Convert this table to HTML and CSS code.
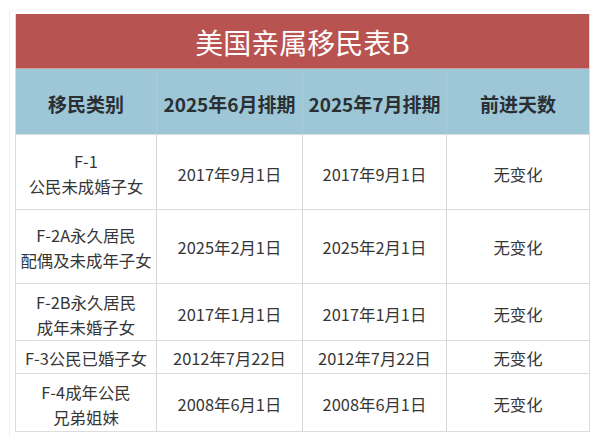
FILE: index.html
```html
<!DOCTYPE html>
<html lang="zh-CN">
<head>
<meta charset="utf-8">
<title>美国亲属移民表B</title>
<link rel="stylesheet" href="styles.css">
</head>
<body>
<div class="frame">
  <div class="table">
    <div class="title">美国亲属移民表B</div>
    <div class="row head">
      <div class="cell">移民类别</div>
      <div class="cell">2025年6月排期</div>
      <div class="cell">2025年7月排期</div>
      <div class="cell">前进天数</div>
    </div>
    <div class="row r1">
      <div class="cell">F-1<br>公民未成婚子女</div>
      <div class="cell">2017年9月1日</div>
      <div class="cell">2017年9月1日</div>
      <div class="cell">无变化</div>
    </div>
    <div class="row r2">
      <div class="cell">F-2A永久居民<br>配偶及未成年子女</div>
      <div class="cell">2025年2月1日</div>
      <div class="cell">2025年2月1日</div>
      <div class="cell">无变化</div>
    </div>
    <div class="row r3">
      <div class="cell">F-2B永久居民<br>成年未婚子女</div>
      <div class="cell">2017年1月1日</div>
      <div class="cell">2017年1月1日</div>
      <div class="cell">无变化</div>
    </div>
    <div class="row r4">
      <div class="cell">F-3公民已婚子女</div>
      <div class="cell">2012年7月22日</div>
      <div class="cell">2012年7月22日</div>
      <div class="cell">无变化</div>
    </div>
    <div class="row r5">
      <div class="cell">F-4成年公民<br>兄弟姐妹</div>
      <div class="cell">2008年6月1日</div>
      <div class="cell">2008年6月1日</div>
      <div class="cell">无变化</div>
    </div>
  </div>
</div>
</body>
</html>
```

FILE: styles.css
```css
html, body {
  margin: 0;
  padding: 0;
  background: #ffffff;
}

body {
  font-family: "Noto Sans CJK SC", "Noto Sans", sans-serif;
  color: #333333;
}

.frame {
  margin: 10px 0 0 9px;
  width: 584px;
  height: 428px;
  box-sizing: border-box;
  border-left: 1px solid #f1f1f1;
  border-top: 1px solid #f6f6f6;
  padding: 3px 0 0 5px;
}

.table {
  width: 575px;
  box-sizing: border-box;
  border: 1px solid #dcdcdc;
  border-top: none;
  background: #ffffff;
}

.title {
  height: 54px;
  background: #b85351;
  color: #ffffff;
  font-size: 28px;
  line-height: 54px;
  text-align: center;
  padding-top: 1px;
  box-sizing: border-box;
}

.row {
  display: grid;
  grid-template-columns: 140px 146px 144px 143px;
  border-top: 1px solid #dcdcdc;
  box-sizing: border-box;
}

.cell {
  display: flex;
  align-items: center;
  justify-content: center;
  text-align: center;
  font-size: 16.4px;
  line-height: 25px;
  color: #363636;
  border-left: 1px solid #d6d6d6;
}

.cell:first-child {
  border-left: none;
}

.head {
  height: 66px;
  background: #9dc7d7;
  border-top: 1px solid #c9a0a0;
}

.head .cell {
  font-size: 19px;
  font-weight: 700;
  color: #2a2f33;
  border-left: 1px solid #a8ceda;
  padding-top: 3px;
}

.head .cell:first-child {
  border-left: none;
}

.r1 { height: 75px; }
.r1 .cell { padding-top: 4px; }
.r2 { height: 74px; }
.r2 .cell { padding-top: 2px; }
.r3 { height: 57px; }
.r3 .cell { padding-top: 5px; }
.r4 { height: 33px; }
.r4 .cell { padding-top: 2px; }
.r5 { height: 58px; }
.r5 .cell { padding-top: 4px; }
```
